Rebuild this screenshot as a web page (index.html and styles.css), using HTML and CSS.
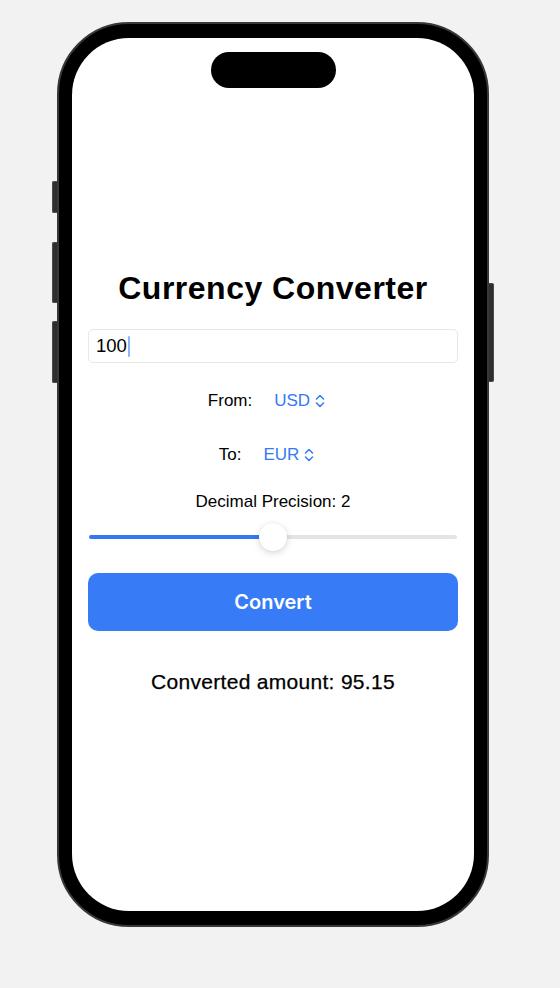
FILE: index.html
```html
<!DOCTYPE html>
<html lang="en">
<head>
<meta charset="utf-8">
<title>Currency Converter</title>
<link rel="stylesheet" href="styles.css">
</head>
<body>
<div class="stage">
  <div class="phone">
    <span class="hw-btn hw-action"></span>
    <span class="hw-btn hw-vol-up"></span>
    <span class="hw-btn hw-vol-down"></span>
    <span class="hw-btn hw-power"></span>
    <div class="screen">
      <div class="island"></div>
      <main class="app">
        <h1 class="title">Currency Converter</h1>
        <div class="field"><span class="field-text">100</span><span class="caret"></span></div>
        <div class="picker-row">
          <span class="label">From:</span>
          <span class="picker">USD
            <svg class="chev" viewBox="0 0 10 14" width="10" height="14"><path d="M1.5 5 L5 1.5 L8.5 5 M1.5 9 L5 12.5 L8.5 9" fill="none" stroke="currentColor" stroke-width="1.5" stroke-linecap="round" stroke-linejoin="round"/></svg>
          </span>
        </div>
        <div class="picker-row row-to">
          <span class="label">To:</span>
          <span class="picker">EUR
            <svg class="chev" viewBox="0 0 10 14" width="10" height="14"><path d="M1.5 5 L5 1.5 L8.5 5 M1.5 9 L5 12.5 L8.5 9" fill="none" stroke="currentColor" stroke-width="1.5" stroke-linecap="round" stroke-linejoin="round"/></svg>
          </span>
        </div>
        <div class="precision">Decimal Precision: 2</div>
        <div class="slider">
          <div class="track"><div class="fill" style="width:50%"></div></div>
          <div class="thumb" style="left:calc(50% - 14px)"></div>
        </div>
        <button class="convert" type="button">Convert</button>
        <div class="result">Converted amount: 95.15</div>
      </main>
    </div>
  </div>
</div>
</body>
</html>
```

FILE: styles.css
```css
* { box-sizing: border-box; }

html, body {
  margin: 0;
  padding: 0;
  background: #f2f2f2;
  width: 560px;
  height: 988px;
  overflow: hidden;
  font-family: "Liberation Sans", Arial, sans-serif;
  color: #000;
}

.stage {
  display: flex;
  padding: 22px 0 0 57px;
}

.phone {
  position: relative;
  width: 432px;
  height: 905px;
  border: 2px solid #383838;
  border-radius: 72px;
  background: #000;
  padding: 14px 13px;
}

.hw-btn {
  position: absolute;
  width: 5px;
  background: #2e2e2e;
  border: 1px solid #4a4a4a;
}
.hw-action { left: -7px; top: 157px; height: 32px; border-right: none; border-radius: 2px 0 0 2px; }
.hw-vol-up { left: -7px; top: 218px; height: 61px; border-right: none; border-radius: 2px 0 0 2px; }
.hw-vol-down { left: -7px; top: 297px; height: 62px; border-right: none; border-radius: 2px 0 0 2px; }
.hw-power { right: -7px; top: 259px; height: 99px; border-left: none; border-radius: 0 2px 2px 0; }

.screen {
  position: relative;
  width: 402px;
  height: 873px;
  background: #fff;
  border-radius: 57px;
  overflow: hidden;
}

.island {
  position: absolute;
  top: 14px;
  left: 139px;
  width: 125px;
  height: 36px;
  border-radius: 18px;
  background: #000;
}

.app {
  display: flex;
  flex-direction: column;
  align-items: stretch;
  padding: 230px 16px 0;
}

.title {
  margin: 0;
  font-size: 32px;
  line-height: 40px;
  font-weight: 700;
  letter-spacing: 0.5px;
  text-align: center;
}

.field {
  margin-top: 21px;
  height: 34px;
  border: 1px solid #e8e8e8;
  border-radius: 5px;
  display: flex;
  align-items: center;
  padding-left: 7px;
}
.field-text {
  font-size: 18.5px;
  line-height: 22px;
}
.caret {
  width: 2px;
  height: 21px;
  background: #8fb5f9;
  margin-left: 1px;
  border-radius: 1px;
}

.picker-row {
  margin-top: 27px;
  display: flex;
  justify-content: center;
  align-items: center;
  gap: 22px;
  padding-right: 13px;
  font-size: 17px;
  line-height: 22px;
}
.row-to { margin-top: 32px; }

.picker {
  color: #3478f6;
  display: flex;
  align-items: center;
  gap: 5px;
}
.chev { display: block; }

.precision {
  margin-top: 25px;
  font-size: 17px;
  line-height: 22px;
  text-align: center;
}

.slider {
  position: relative;
  margin-top: 10px;
  height: 28px;
  display: flex;
  align-items: center;
  padding: 0 1px;
}
.track {
  flex: 1;
  height: 4px;
  border-radius: 2px;
  background: #e4e4e6;
  display: flex;
}
.fill {
  height: 4px;
  border-radius: 2px;
  background: #3478f6;
}
.thumb {
  position: absolute;
  top: 0;
  width: 28px;
  height: 28px;
  border-radius: 50%;
  background: #fff;
  box-shadow: 0 2px 7px rgba(0, 0, 0, 0.16), 0 0 0 0.5px rgba(0, 0, 0, 0.05);
}

.convert {
  margin-top: 22px;
  height: 58px;
  border: none;
  border-radius: 10px;
  background: #377cf6;
  color: #fff;
  font-family: Inter, "Liberation Sans", Arial, sans-serif;
  font-size: 20px;
  font-weight: 600;
  padding: 0;
}

.result {
  margin-top: 38px;
  font-size: 21px;
  line-height: 26px;
  letter-spacing: 0.3px;
  text-align: center;
  -webkit-text-stroke: 0.25px #000;
}
```
